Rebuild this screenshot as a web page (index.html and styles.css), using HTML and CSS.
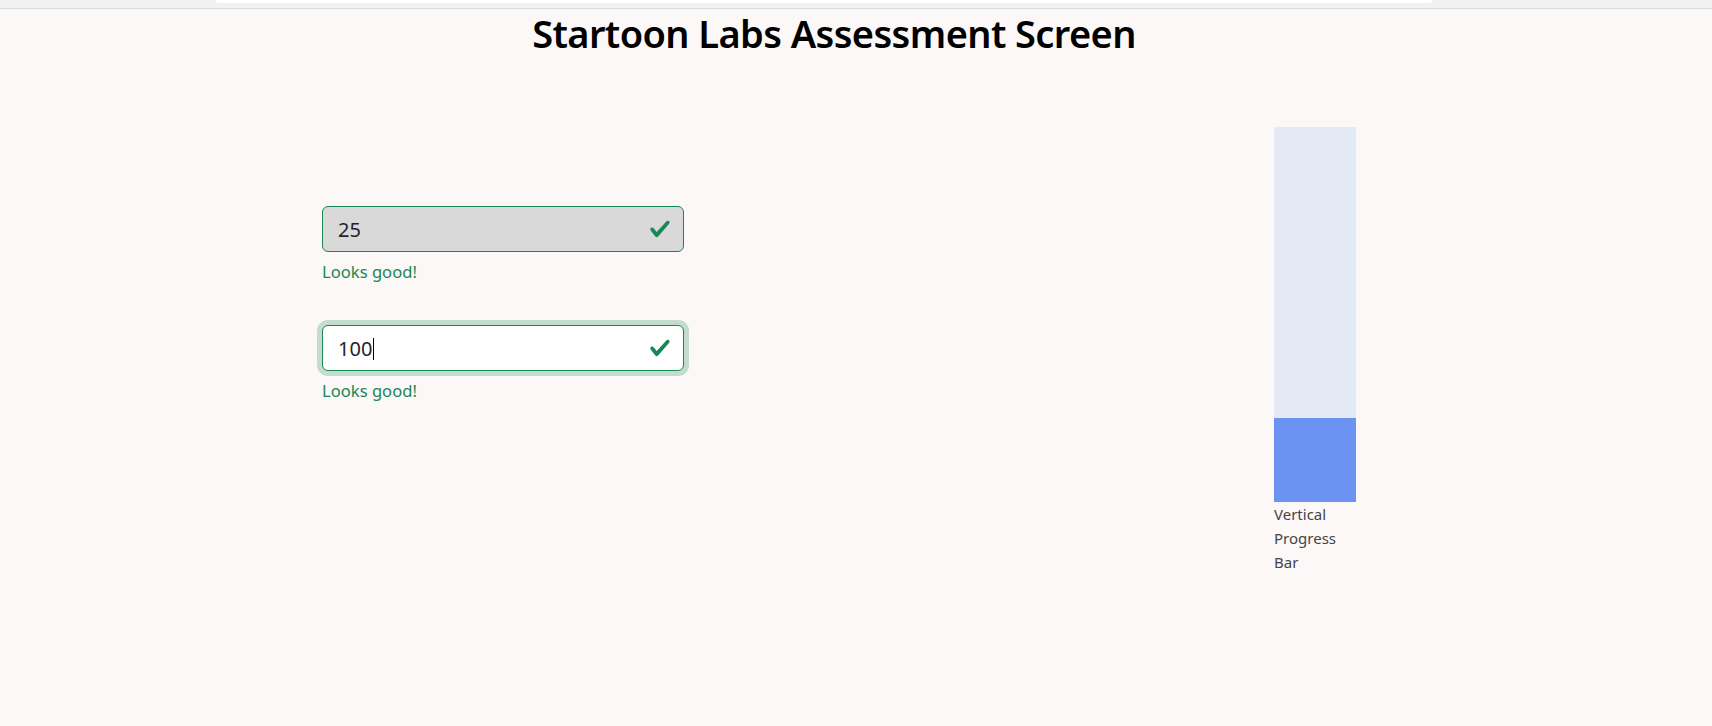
FILE: index.html
```html
<!DOCTYPE html>
<html lang="en">
<head>
<meta charset="utf-8">
<title>Startoon Labs Assessment Screen</title>
<link rel="stylesheet" href="styles.css">
</head>
<body>
<div class="chrome"><div class="chrome-tab"></div></div>
<main class="page">
  <h1 class="title">Startoon Labs Assessment Screen</h1>
  <div class="content">
    <form class="form">
      <div class="field field-disabled">
        <span class="field-value">25</span>
        <svg class="check" viewBox="0 0 8 8" aria-hidden="true"><path d="M2.3 6.73.6 4.53c-.4-1.04.46-1.4 1.1-.8l1.1 1.4 3.4-3.8c.6-.63 1.6-.27 1.2.7l-4 4.6c-.43.5-.8.4-1.1.1z"/></svg>
      </div>
      <div class="feedback">Looks good!</div>
      <div class="field field-focus">
        <span class="field-value">100<span class="caret"></span></span>
        <svg class="check" viewBox="0 0 8 8" aria-hidden="true"><path d="M2.3 6.73.6 4.53c-.4-1.04.46-1.4 1.1-.8l1.1 1.4 3.4-3.8c.6-.63 1.6-.27 1.2.7l-4 4.6c-.43.5-.8.4-1.1.1z"/></svg>
      </div>
      <div class="feedback">Looks good!</div>
    </form>
    <div class="progress-wrap">
      <div class="progress-track">
        <div class="progress-fill" style="height: 22.3%"></div>
      </div>
      <div class="progress-label">Vertical Progress Bar</div>
    </div>
  </div>
</main>
</body>
</html>
```

FILE: styles.css
```css
html, body {
  margin: 0;
  padding: 0;
}

body {
  background: #fcf8f7;
  font-family: "Noto Sans", "Open Sans", sans-serif;
  color: #212529;
  height: 726px;
  overflow: hidden;
}

.chrome {
  height: 8px;
  background: #f1f1f1;
  border-bottom: 1px solid #dadada;
  padding-left: 216px;
}

.chrome-tab {
  width: 1216px;
  height: 3px;
  background: #ffffff;
  border-radius: 0 0 6px 6px;
}

.page {
  background: #fcf8f7;
}

.title {
  margin: 0;
  padding-right: 44px;
  text-align: center;
  font-size: 38px;
  line-height: 48px;
  font-weight: 600;
  letter-spacing: -0.6px;
  color: #000;
}

.content {
  display: flex;
  align-items: flex-start;
  padding-left: 322px;
  padding-top: 70px;
}

.form {
  width: 362px;
  margin-top: 79px;
}

.field {
  box-sizing: border-box;
  height: 46px;
  border: 1px solid #198754;
  border-radius: 6px;
  padding: 0 12px 0 15px;
  display: flex;
  align-items: center;
  justify-content: space-between;
  font-size: 20px;
  color: #212529;
}

.field-disabled {
  background: #d9d9d9;
}

.field-focus {
  background: #ffffff;
  margin-top: 40px;
  box-shadow: 0 0 0 5px rgba(25, 135, 84, 0.25);
}

.caret {
  display: inline-block;
  width: 1px;
  height: 22px;
  background: #000;
  vertical-align: -4px;
  margin-left: 1px;
}

.check {
  width: 22px;
  height: 22px;
  fill: #198754;
}

.feedback {
  margin-top: 7px;
  font-size: 16.6px;
  line-height: 26px;
  color: #198754;
}

.progress-wrap {
  margin-left: 590px;
  width: 82px;
}

.progress-track {
  height: 375px;
  background: #e3eaf4;
  display: flex;
  flex-direction: column;
  justify-content: flex-end;
}

.progress-fill {
  background: #6d93f2;
}

.progress-label {
  font-size: 15px;
  line-height: 24px;
  color: #444;
}
```
